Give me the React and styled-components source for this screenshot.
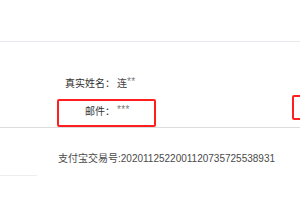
import React from 'react'
import styled, { createGlobalStyle } from 'styled-components'

const GlobalStyle = createGlobalStyle`
  body {
    margin: 0;
    background: #fff;
    font-family: "Liberation Sans", "Noto Sans CJK SC", sans-serif;
    overflow: hidden;
  }
`

const Page = styled.div`
  width: 300px;
  height: 200px;
  display: flex;
  flex-direction: column;
  overflow: hidden;
`

const Header = styled.div`
  height: 41px;
  border-bottom: 1px solid #e6e9ee;
`

const InfoSection = styled.div`
  display: flex;
  flex-direction: column;
  gap: 14px;
  padding: 35px 0 0 0;
  height: 86px;
  box-sizing: border-box;
  border-bottom: 1px solid #dcdcdc;
  position: relative;
`

const Row = styled.div`
  display: flex;
  align-items: center;
  height: 14px;
  font-size: 10px;
  line-height: 14px;
  color: #333;
  position: relative;
`

const Label = styled.span`
  width: 115px;
  text-align: right;
  flex-shrink: 0;
`

const Value = styled.span`
  margin-left: 2px;
  color: #444;
`

const Mask = styled.span`
  color: #7a7a7a;
  font-size: 10px;
  letter-spacing: 0.3px;
  position: relative;
  top: -2px;
`

const Highlight = styled.div`
  position: absolute;
  left: ${p => p.left}px;
  top: ${p => p.top}px;
  width: ${p => p.width}px;
  height: ${p => p.height}px;
  border: 2px solid #ff1f1f;
  border-radius: 2px;
  box-sizing: border-box;
`

const TradeSection = styled.div`
  display: flex;
  flex-direction: column;
`

const TradeRow = styled.div`
  padding: 24px 0 0 58px;
  font-size: 10px;
  line-height: 14px;
  color: #4a4a4a;
  white-space: nowrap;
`

const ShortRule = styled.div`
  margin-top: 9px;
  width: 37px;
  height: 1px;
  background: #eeeeee;
`

export default function App() {
  return (
    <Page>
      <GlobalStyle />
      <Header />
      <InfoSection>
        <Row>
          <Label>真实姓名：</Label>
          <Value>连<Mask>**</Mask></Value>
        </Row>
        <Row>
          <Label>邮件：</Label>
          <Value><Mask>***</Mask></Value>
        </Row>
        <Highlight left={57} top={57} width={99} height={28} />
        <Highlight left={292} top={53} width={20} height={25} />
      </InfoSection>
      <TradeSection>
        <TradeRow>支付宝交易号:2020112522001120735725538931</TradeRow>
        <ShortRule />
      </TradeSection>
    </Page>
  )
}
